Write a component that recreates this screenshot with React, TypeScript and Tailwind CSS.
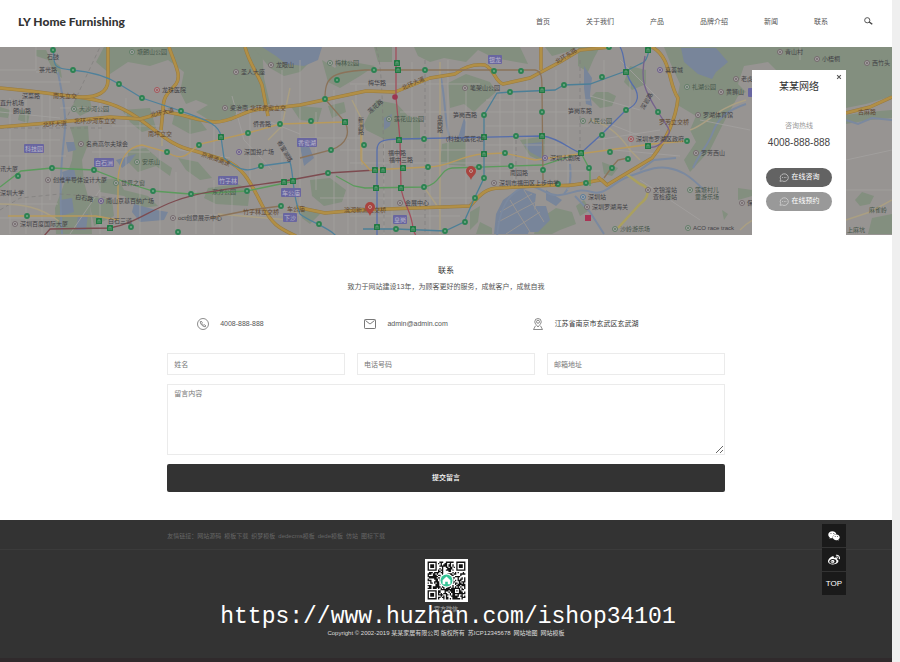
import { useState } from 'react'
import { FaWeixin, FaWeibo } from 'react-icons/fa'

const NAV_ITEMS = ['首页', '关于我们', '产品', '品牌介绍', '新闻', '联系']

const FRIEND_LINKS = ['网站源码', '模板下载', '织梦模板', 'dedecms模板', 'dede模板', '仿站', '图标下载']

/* ---------- Map data ---------- */

const GREENS = [
  'M104 47H238L262 47 264 78 270 104 238 110 232 121 212 122 196 112 208 105 196 100 186 104 180 92 184 72 168 60 150 66 128 62 110 74 96 62Z',
  'M36 50H46L50 58 60 66 62 78 54 72 48 60 36 56Z',
  'M70 127 88 126 89 142 82 160 84 182 90 204 92 234H56L55 208 64 184 72 160 74 140Z',
  'M0 107 10 110 8 118 0 117Z M20 110 30 112 28 123 18 120Z M76 97 90 99 92 110 80 116 72 108Z',
  'M122 110 150 108 156 128 142 132 130 122Z M175 112 198 118 207 130 190 134 172 124Z',
  'M128 150 146 148 160 160 172 168 170 176 156 166 138 172 128 162Z',
  'M98 180 118 178 124 190 148 196 158 206 142 208 124 196 100 192Z M88 196 112 200 114 216 94 226Z',
  'M178 158 198 162 212 178 200 180 186 170Z M208 188 238 184 250 190 248 206 216 204 204 198Z',
  'M253 47H320L316 56 300 72 284 76 270 68Z M290 105 322 108 318 122 300 120Z',
  'M322 60 335 68 342 60 375 66 360 76 340 88 328 82Z M364 124 376 100 397 104 408 116 420 118 420 140 384 139 366 130Z',
  'M374 47H392V62H378Z M414 47H520L528 64 494 58 478 50 466 62 444 58 430 62 418 56Z',
  'M448 83 466 74 490 82 496 92 482 104 474 112 464 104 450 108Z M442 144 466 138 466 166 440 164Z',
  'M310 180 330 178 346 190 342 202 324 206 312 196Z M328 106 344 102 346 112 332 118Z',
  'M520 140 545 136 544 162 530 156Z M545 47H580L566 52 552 56Z M578 47H600L594 58 588 72 578 66Z',
  'M590 98 600 108 612 106 616 96 608 92 596 92Z M630 66 646 70 646 84 632 90 624 82Z',
  'M664 47H892V96L866 104 846 108 846 70H776L768 62 744 66 738 84 746 92 738 96 724 122 710 150 690 172 684 160 696 142 690 130 696 116 676 104 680 84 670 62Z',
  'M538 220 556 208 572 212 576 224 560 230 552 234H534Z M576 206 584 200 590 210 580 216Z',
  'M470 212 480 206 478 222 470 230Z M480 222 492 228 492 234H476Z M300 206 320 214 310 224 302 218Z',
  'M846 115 868 112 892 110V118L870 120 846 124Z M872 218 892 214V234H868Z M855 200 862 192 874 196 870 204 860 206Z',
  'M602 162 618 168 612 176 604 174Z M722 210 728 214 724 220Z M738 188 752 190V196L738 200Z M668 190 672 198 668 200Z',
]

const WATERS = [
  'M262 47H322L318 60 304 66 286 64 276 56Z',
  'M681 48H716L728 62 716 72 712 79 698 74 684 62Z',
  'M503 200 520 188 536 194 534 212 528 234H494L496 214Z M536 206 546 206 550 220 538 232H526Z M546 190 562 200 556 206 546 200Z',
  'M524 144 542 142 541 158 530 152Z M584 66 592 78 590 94 592 106 586 104 584 88Z',
  'M134 204 156 210 168 212 164 220 140 222 132 212Z M300 146 308 144 314 158 304 166Z M116 160 136 154 130 162 122 168Z',
  'M66 142 74 142 76 150 68 152Z M62 172 74 168 76 178 64 182Z M60 200 72 198 74 212 62 216Z M78 216 88 214 86 230 76 230Z',
  'M384 118 392 114 390 126 384 130Z M459 108 464 118 458 138 464 142 466 122Z',
]

const RIVERS = [
  'M497 236C500 204 512 190 526 187S545 197 560 195 578 188 592 192 612 182 630 176 656 166 668 168 688 174 704 190',
  'M58 72C62 94 66 110 65 128S58 170 62 234',
  'M693 168C700 152 708 146 713 132S728 110 746 104',
  'M846 120 858 124 872 118 892 120',
  'M441 78C446 104 444 118 450 140',
  'M640 170 654 160 676 158',
  'M570 164C572 184 568 190 564 194 M575 196 590 212 604 234',
]

const MINOR_ROADS = [
  'M0 70H36V47 M36 72H58 M0 82H70 M10 98V234 M26 94V234 M42 94V234 M0 140H60 M0 156H66 M0 204H58 M0 218H54 M50 94V200',
  'M100 98V234 M112 126H160 M126 98V180 M140 122V234 M92 152H150 M150 126 180 150 230 158 M160 150V234 M176 172V234 M190 120V190',
  'M214 122V160 M232 96 244 140 272 170 M250 110V190 M270 122 300 134 M180 215H300 M196 190V234 M214 180V234 M232 192V234',
  'M282 70V190 M300 60V234 M316 112V190 M334 90V234 M348 140V234 M356 85V234 M384 140V234 M392 140V234 M412 62V234',
  'M430 80V234 M448 60V170 M466 90V206 M300 138H362 M340 150H480 M350 163H500 M320 198H480 M350 216H460 M350 84H480',
  'M400 112H580 M500 92V185 M514 92V185 M527 80V185 M556 70V185 M568 60V190 M486 100H590 M486 126H590 M486 145H570',
  'M486 171H600 M590 96 640 110 M600 120 650 140 M604 60V150 M620 60 660 100 M596 140 660 130 M630 80V160 M614 150 680 156',
  'M640 180 700 220 M700 120 750 130 M846 160 892 150 M846 190H892 M800 47V60 M60 108H110 M70 234 100 190 M0 112 60 118',
]

const LIGHT_ROADS = [
  'M440 62V234 M352 100 362 120V165 M424 187 440 210 M0 204C20 204 40 206 60 222 M162 125V146',
  'M590 120C610 124 622 138 630 150L640 160 M690 130C708 124 716 108 746 100 M740 230C756 214 770 210 846 214',
  'M846 220 870 212 892 200',
  'M290 88 282 126 268 140 M218 214 290 220 300 208',
]

const HIGHWAYS = [
  'M0 88 30 91 85 98C110 102 125 108 145 123S175 147 195 151L225 160C245 168 252 186 262 205S278 228 296 236',
  'M108 47V80C108 92 98 98 78 97',
  'M0 127 60 122 110 117 140 119 166 112C185 114 195 121 215 122 235 122 245 108 266 109L300 105 366 91 395 92 430 78 455 74C465 66 475 64 485 65 495 70 495 82 503 84L530 78 560 62 580 50 610 47',
  'M169 47C175 65 182 76 176 84S163 94 163 110L161 130',
  'M245 47C250 65 256 70 262 85L268 116',
  'M541 47V70',
  'M296 207 325 213 360 210 470 206C480 195 485 188 500 188L555 185C574 188 592 180 602 180L607 185 652 158C666 140 676 118 678 98 668 84 672 58 652 47',
  'M598 177 607 185 M846 113 870 107 892 97',
]

const SUBWAYS = [
  { color: '#4f819b', d: 'M53 47C55 64 50 68 72 70S108 77 119 84L142 98 181 111C205 120 220 124 221 137L224 158C240 172 250 172 261 166L290 162C294 175 292 195 300 214 310 222 330 228 336 236' },
  { color: '#5b9b5c', d: 'M0 187 21 171 52 168 94 170 130 184 153 191 190 194 247 191 290 182 M336 176 354 186 365 188 424 187C440 185 440 169 452 168L543 165 581 153 590 170V186' },
  { color: '#7d4b50', d: 'M44 236 50 229 110 228C134 224 150 210 175 201S220 190 285 181L328 173 376 170' },
  { color: '#b89a5c', d: 'M8 216H96L118 220V178C120 160 126 147 142 145L167 152C185 164 190 150 200 144L248 133 280 124 345 122 M361 120V160L370 170 428 167C450 167 460 155 484 154L504 153 535 160 652 144 687 141' },
  { color: '#8b735a', d: 'M300 158 331 150C348 144 350 132 345 122L325 99C325 78 330 72 365 70H535C542 71 542 78 542 90L543 180 M210 218 250 210 281 206 M604 178 612 167 618 160 628 158' },
  { color: '#a14f5c', d: 'M396 47V97L400 140 401 188C404 206 412 212 413 229L416 236' },
  { color: '#566eab', d: 'M377 236V150C377 142 381 139 400 139L542 136C560 138 570 150 581 153L604 132 626 110C640 104 640 94 632 84 622 70 626 56 620 47' },
  { color: '#4c7f97', d: 'M363 229 396 229 445 231 464 222 475 197 484 178V115L497 93 510 92 555 90 564 85 590 84 626 71 640 64C648 62 648 52 650 47' },
  { color: '#75628c', d: 'M645 56C640 80 644 90 658 112S672 130 664 140 650 147 648 147' },
]

const STATIONS = [
  [53, 50], [73, 70], [119, 84], [142, 98], [181, 111], [248, 133], [280, 124], [167, 152], [199, 145], [52, 168], [94, 170],
  [18, 176], [153, 191], [191, 194], [247, 191], [261, 166], [281, 206], [27, 216], [131, 227], [178, 232], [325, 99],
  [337, 80], [374, 70], [425, 70], [494, 71], [521, 71], [311, 121], [331, 150], [364, 145], [328, 173], [424, 139],
  [428, 167], [424, 187], [479, 167], [511, 166], [505, 153], [484, 115], [484, 178], [475, 198], [465, 222], [445, 231],
  [396, 229], [319, 224], [510, 92], [564, 85], [542, 112], [516, 136], [543, 170], [558, 184], [586, 183], [589, 168],
  [602, 77], [626, 110], [658, 112], [602, 135], [610, 152], [628, 159], [612, 168], [687, 141], [609, 47],
]

const HUBS = [
  [221, 137], [99, 221], [110, 228], [284, 182], [293, 181], [397, 63], [398, 70], [345, 122], [399, 140], [375, 170],
  [383, 170], [403, 168], [376, 188], [401, 188], [377, 227], [413, 229], [484, 137], [484, 154], [542, 90], [542, 136],
  [581, 153], [626, 72], [648, 50], [648, 146],
]

type MapLabel = { x: number; y: number; text: string; tone?: 'road' | 'park'; rotate?: number; icon?: string }

const MAP_LABELS: MapLabel[] = [
  { x: 39, y: 72, text: '茶光路' },
  { x: 47, y: 59, text: '石鼓' },
  { x: 22, y: 98, text: '深菜路' },
  { x: 53, y: 98, text: '南头立交', tone: 'road' },
  { x: 0, y: 105, text: '直升机场' },
  { x: 13, y: 113, text: '朗山路' },
  { x: 79, y: 111, text: '大沙河公园', tone: 'park', icon: '#5b7a62' },
  { x: 43, y: 127, text: '北环大道', tone: 'road', rotate: -4 },
  { x: 74, y: 123, text: '北环沙河东立交', tone: 'road' },
  { x: 137, y: 54, text: '塘朗山公园', tone: 'park', icon: '#5b7a62' },
  { x: 162, y: 92, text: '龙珠医院', icon: '#a84b50' },
  { x: 151, y: 117, text: '北环大道', tone: 'road', rotate: -12 },
  { x: 148, y: 136, text: '南坪立交', tone: 'road' },
  { x: 86, y: 146, text: '名商高尔夫球会', icon: '#716469' },
  { x: 142, y: 164, text: '安乐山', tone: 'park', icon: '#5b7a62' },
  { x: 201, y: 156, text: '京港澳高速', tone: 'road', rotate: 20 },
  { x: 241, y: 74, text: '圣人大座', icon: '#716469' },
  { x: 276, y: 67, text: '龙眼山', icon: '#716469' },
  { x: 230, y: 110, text: '梁治南', icon: '#716469' },
  { x: 250, y: 110, text: '北环香蜜立交', tone: 'road' },
  { x: 253, y: 126, text: '侨香路' },
  { x: 277, y: 142, text: '香蜜湖路', rotate: 60 },
  { x: 244, y: 154, text: '深国投广场', icon: '#66558d' },
  { x: 0, y: 171, text: '讯大厦' },
  { x: 53, y: 182, text: '创维半导体设计大厦', icon: '#716469' },
  { x: 121, y: 185, text: '世界之窗', tone: 'park', icon: '#5b7a62' },
  { x: 0, y: 195, text: '深圳大学' },
  { x: 75, y: 199, text: '白石路', rotate: 8 },
  { x: 106, y: 203, text: '南山京基百纳广场', icon: '#66558d' },
  { x: 108, y: 223, text: '白石三道' },
  { x: 20, y: 226, text: '深圳百度国际大厦', icon: '#716469' },
  { x: 178, y: 220, text: 'oct创意展示中心', icon: '#716469' },
  { x: 212, y: 194, text: '东方公园', tone: 'park' },
  { x: 243, y: 214, text: '竹子林立交桥', tone: 'road' },
  { x: 287, y: 211, text: '车公庙', tone: 'road' },
  { x: 335, y: 65, text: '梅林公园', tone: 'park', icon: '#5b7a62' },
  { x: 368, y: 85, text: '梅华路' },
  { x: 403, y: 90, text: '北环大道', tone: 'road', rotate: -24 },
  { x: 370, y: 114, text: '莲花路', rotate: -42 },
  { x: 394, y: 121, text: '莲花山公园', tone: 'park', icon: '#5b7a62' },
  { x: 453, y: 117, text: '笋岗西路' },
  { x: 568, y: 113, text: '笋岗东路' },
  { x: 470, y: 90, text: '笔架山公园', icon: '#716469' },
  { x: 446, y: 141, text: '(科技)(莲花北)' },
  { x: 388, y: 155, text: '福中路' },
  { x: 389, y: 162, text: '福中三路' },
  { x: 510, y: 175, text: '南园路' },
  { x: 499, y: 185, text: '深圳市福田区上步中学', icon: '#716469' },
  { x: 405, y: 205, text: '会展中心', icon: '#716469' },
  { x: 344, y: 212, text: '滨河新洲立交桥', tone: 'road' },
  { x: 557, y: 64, text: '北环东路', tone: 'road', rotate: -32 },
  { x: 550, y: 160, text: '深圳大剧院', icon: '#66558d' },
  { x: 588, y: 123, text: '人民公园', tone: 'park', icon: '#5b7a62' },
  { x: 665, y: 72, text: '喜荟城', icon: '#66558d' },
  { x: 692, y: 89, text: '礼湖公园', tone: 'park', icon: '#5b7a62' },
  { x: 741, y: 81, text: '老虎', icon: '#716469' },
  { x: 726, y: 94, text: '黄狮山', icon: '#716469' },
  { x: 644, y: 110, text: '深岩路', rotate: -60 },
  { x: 659, y: 124, text: '罗芳立交桥', tone: 'road' },
  { x: 703, y: 117, text: '罗湖体育馆', icon: '#716469' },
  { x: 636, y: 141, text: '深圳市罗湖区政府', icon: '#a84b50' },
  { x: 701, y: 155, text: '罗芳西山', icon: '#716469' },
  { x: 653, y: 192, text: '文锦渡站', icon: '#716469' },
  { x: 653, y: 199, text: '查检疫站' },
  { x: 695, y: 192, text: '莲塘村儿', tone: 'park', icon: '#5b7a62' },
  { x: 695, y: 199, text: '童游乐场', tone: 'park' },
  { x: 588, y: 199, text: '深圳站', icon: '#50799b' },
  { x: 592, y: 209, text: '深圳罗湖海关', icon: '#716469' },
  { x: 620, y: 231, text: '沙岭游乐场', tone: 'park', icon: '#5b7a62' },
  { x: 693, y: 230, text: 'ACO race track', icon: '#5b7a62' },
  { x: 785, y: 54, text: '青山村', icon: '#716469' },
  { x: 822, y: 61, text: '小梧桐', icon: '#716469' },
  { x: 872, y: 65, text: '西竹头', icon: '#716469' },
  { x: 747, y: 205, text: '保', icon: '#716469' },
  { x: 858, y: 114, text: '古麻路', tone: 'road' },
  { x: 869, y: 212, text: '麻雀岭', tone: 'park' },
  { x: 847, y: 232, text: '上麻坑', tone: 'park' },
]

const DISTRICTS = [
  { x: 24, y: 144, w: 20, text: '科技园' },
  { x: 94, y: 158, w: 20, text: '白石洲' },
  { x: 218, y: 176, w: 20, text: '竹子林' },
  { x: 281, y: 188, w: 20, text: '车公庙' },
  { x: 283, y: 213, w: 14, text: '下沙' },
  { x: 297, y: 138, w: 20, text: '香蜜湖' },
  { x: 488, y: 55, w: 14, text: '银龙' },
  { x: 393, y: 215, w: 14, text: '皇岗' },
]

const LABEL_FILL = { road: '#5f4630', park: '#46564a', plain: '#424146' }

function MapPin({ x, y }: { x: number; y: number }) {
  return (
    <g transform={`translate(${x} ${y})`}>
      <path d="M0 0C-1 -4-5 -5-5 -9A5 5 0 0 1 5 -9C5 -5 1 -4 0 0Z" fill="#a9443f" />
      <circle cx="0" cy="-9" r="1.5" fill="none" stroke="#bd9b96" />
    </g>
  )
}

function CityMap() {
  return (
    <svg viewBox="0 47 892 188" preserveAspectRatio="xMidYMid slice" className="block h-full w-full" role="img" aria-label="地图">
      <rect x="0" y="47" width="892" height="188" fill="#979492" />
      {GREENS.map((d) => (
        <path key={d} d={d} fill="#838f7f" />
      ))}
      {WATERS.map((d) => (
        <path key={d} d={d} fill="#78859a" />
      ))}
      {/* Fish ponds south of the river */}
      <path d="M500 212 532 194 M498 222 536 202 M506 234 540 212 M510 200 530 232 M524 190 544 222" stroke="#979492" fill="none" />
      {RIVERS.map((d) => (
        <path key={d} d={d} fill="none" stroke="#7b899f" strokeWidth="2" />
      ))}
      {MINOR_ROADS.map((d) => (
        <path key={d} d={d} fill="none" stroke="#a3a19f" strokeWidth="0.8" />
      ))}
      <path
        d="M0 128H70 88 105 M62 128 100 47 M0 210 20 198 60 194 116 198 M376 47C380 60 384 74 384 234 M425 60V234 M516 140V180 M580 60V150"
        fill="none"
        stroke="#7e7c7b"
        strokeWidth="0.7"
        strokeDasharray="4 3"
      />
      {LIGHT_ROADS.map((d) => (
        <path key={d} d={d} fill="none" stroke="#aa9f83" strokeWidth="1.5" />
      ))}
      <path d="M626 174 640 184C652 188 648 198 640 204L618 228" fill="none" stroke="#aaa05f" strokeWidth="2.5" />
      {HIGHWAYS.map((d) => (
        <g key={d} fill="none" strokeLinejoin="round">
          <path d={d} stroke="#987a40" strokeWidth="3.5" />
          <path d={d} stroke="#b18f46" strokeWidth="2.5" />
        </g>
      ))}
      {SUBWAYS.map((line) => (
        <path key={line.d} d={line.d} fill="none" stroke={line.color} strokeWidth="1.3" />
      ))}
      {STATIONS.map(([x, y]) => (
        <g key={`${x}-${y}`}>
          <circle cx={x} cy={y} r="2.9" fill="#2c8252" />
          <path d={`M${x - 1} ${y - 1}l2 2m0 -2l-2 2`} stroke="#8ab397" strokeWidth="0.6" />
        </g>
      ))}
      {HUBS.map(([x, y]) => (
        <g key={`${x}-${y}`}>
          <rect x={x - 3} y={y - 3} width="6" height="6" rx="0.6" fill="#217a43" />
          <path d={`M${x - 1} ${y - 1}v3m0 -3h2v3`} fill="none" stroke="#8ab397" strokeWidth="0.6" />
        </g>
      ))}
      <circle cx="395" cy="97" r="2.8" fill="#9c3650" />
      <rect x="585" y="215" width="6" height="6" fill="#a93455" />
      <rect x="748" y="88" width="8" height="9" rx="1" fill="#6966a0" />
      {DISTRICTS.map((d) => (
        <g key={d.text}>
          <rect x={d.x} y={d.y} width={d.w} height="9" rx="1" fill="#6966a0" />
          <text x={d.x + d.w / 2} y={d.y + 7} fontSize="6" textAnchor="middle" fill="#bab8ca">
            {d.text}
          </text>
        </g>
      ))}
      {MAP_LABELS.map((l) => (
        <g key={`${l.x}-${l.y}`} transform={`rotate(${l.rotate ?? 0} ${l.x} ${l.y})`}>
          {l.icon && <circle cx={l.x - 5} cy={l.y - 2} r="2.5" fill="#a5a2a3" stroke={l.icon} strokeWidth="0.9" />}
          {l.icon && <circle cx={l.x - 5} cy={l.y - 2} r="1" fill={l.icon} />}
          <text x={l.x} y={l.y} fontSize="6" fill={LABEL_FILL[l.tone ?? 'plain']}>
            {l.text}
          </text>
        </g>
      ))}
      {/* Streets written top to bottom */}
      {['新', '洲', '路'].map((c, i) => (
        <text key={c} x="358" y={122 + i * 6} fontSize="6" fill="#424146">{c}</text>
      ))}
      {['皇', '岗', '路'].map((c, i) => (
        <text key={c} x="437" y={120 + i * 6} fontSize="6" fill="#424146">{c}</text>
      ))}
      <MapPin x={370} y={216} />
      <MapPin x={471} y={180} />
    </svg>
  )
}

/* ---------- QR code ---------- */

const QR_SIZE = 29

function isDarkModule(row: number, col: number) {
  for (const [r, c] of [[0, 0], [0, QR_SIZE - 7], [QR_SIZE - 7, 0]]) {
    const y = row - r
    const x = col - c
    if (y >= -1 && y <= 7 && x >= -1 && x <= 7) {
      const ring = Math.max(Math.abs(y - 3), Math.abs(x - 3))
      return ring === 3 || ring <= 1
    }
  }
  const align = Math.max(Math.abs(row - 22), Math.abs(col - 22))
  if (align <= 2) return align !== 1
  const hash = Math.sin(row * 12.9898 + col * 78.233) * 43758.5453
  return hash - Math.floor(hash) > 0.48
}

function QrCode() {
  let d = ''
  for (let row = 0; row < QR_SIZE; row++) {
    for (let col = 0; col < QR_SIZE; col++) {
      if (isDarkModule(row, col)) d += `M${col} ${row}h1v1h-1z`
    }
  }
  return (
    <svg viewBox="-2 -2 33 33" className="size-[43px] bg-white" role="img" aria-label="官方微信二维码">
      <path d={d} fill="#111" />
      <circle cx="14.5" cy="14.5" r="5.5" fill="#fff" />
      <circle cx="14.5" cy="14.5" r="4.6" fill="#35c496" />
      <path d="M14.5 11.5l3 2.8v3h-2v-1.8h-2v1.8h-2v-3z" fill="#fff" />
    </svg>
  )
}

/* ---------- Icons ---------- */

function SearchIcon() {
  return (
    <svg viewBox="0 0 18 16" className="h-2 w-[9px]" fill="none" stroke="#444" aria-hidden="true">
      <circle cx="6.5" cy="6.5" r="5.2" strokeWidth="1.8" />
      <path d="M10.5 10l6 4.5" strokeWidth="3" />
    </svg>
  )
}

function PhoneIcon() {
  return (
    <svg viewBox="0 0 24 24" className="size-3" fill="none" stroke="#666" strokeWidth="1.5" aria-hidden="true">
      <circle cx="12" cy="12" r="11" />
      <path d="M8 6L6.500 7.500C6 12 12 18 16.500 17.500L18 16l-3-2.500-1.500 1C12 14 10 12 9.500 10.500L10.500 9z" />
    </svg>
  )
}

function MailIcon() {
  return (
    <svg viewBox="0 0 24 20" className="h-[10px] w-3" fill="none" stroke="#555" strokeWidth="1.6" aria-hidden="true">
      <rect x="1" y="1" width="22" height="18" rx="1.5" />
      <path d="M3 3l7.500 6q1.500 1 3 0L21 3" />
    </svg>
  )
}

function LocationIcon() {
  return (
    <svg viewBox="0 0 20 24" className="h-3 w-[10px]" fill="none" stroke="#666" strokeWidth="1.5" aria-hidden="true">
      <path d="M10 18C7 14 3.500 11 3.500 7.500a6.500 6.500 0 0 1 13 0C16.500 11 13 14 10 18z" />
      <circle cx="10" cy="7.500" r="3" />
      <path d="M5 15.500L1 23h18l-4-7.500" />
    </svg>
  )
}

function ChatIcon() {
  return (
    <svg viewBox="0 0 22 20" className="h-[9px] w-[10px]" fill="none" stroke="#ddd" strokeWidth="1.5" aria-hidden="true">
      <path d="M2 18.500l1.500-4.500A9 8.500 0 1 1 7 17.600z" />
      <path d="M7 10h1.500M10.800 10h1.500M14.500 10H16" strokeWidth="2" />
    </svg>
  )
}

/* ---------- Page sections ---------- */

function Header() {
  return (
    <header className="flex h-[47px] items-center justify-between bg-white pr-[19px] pb-[3px] pl-[18px]">
      <a href="#" className="font-['Lato',sans-serif] text-[12px] leading-4 font-black text-[#333]">
        LY Home Furnishing
      </a>
      <nav className="flex items-center gap-9 text-[7px] leading-3 text-[#555]">
        {NAV_ITEMS.map((item) => (
          <a key={item} href="#">
            {item}
          </a>
        ))}
        <button type="button" aria-label="搜索" className="pb-[2px]">
          <SearchIcon />
        </button>
      </nav>
    </header>
  )
}

function ContactPopup({ onClose }: { onClose: () => void }) {
  return (
    <aside className="absolute top-[23px] right-[46px] bottom-0 flex w-[94px] flex-col items-center bg-white">
      <button type="button" aria-label="关闭" onClick={onClose} className="absolute top-1 right-1">
        <svg viewBox="0 0 8 8" className="size-[6px]" stroke="#555" strokeWidth="1.4" aria-hidden="true">
          <path d="M1.500 1.500l5 5M6.500 1.500l-5 5" />
        </svg>
      </button>
      <h2 className="mt-[10px] text-[10px] leading-[14px] text-[#333]">某某网络</h2>
      <p className="mt-[26px] text-[7px] leading-3 text-[#999]">咨询热线</p>
      <p className="mt-1 text-[10px] leading-[14px] text-[#444]">4008-888-888</p>
      <button type="button" className="mt-[18px] flex h-[19px] w-[66px] items-center justify-center gap-[3px] rounded-full bg-[#636363] text-[7px] text-white">
        <ChatIcon />
        在线咨询
      </button>
      <button type="button" className="mt-[5px] flex h-[19px] w-[66px] items-center justify-center gap-[3px] rounded-full bg-[#999] text-[7px] text-white">
        <ChatIcon />
        在线预约
      </button>
    </aside>
  )
}

function ContactForm() {
  const field = 'w-full border border-[#ebebeb] bg-white px-[6px] text-[7px] text-[#555] outline-none placeholder:text-[#777]'

  return (
    <form className="mt-[21px]" onSubmit={(e) => e.preventDefault()}>
      <div className="grid grid-cols-3 gap-3">
        <input className={`${field} h-[22px]`} type="text" placeholder="姓名" aria-label="姓名" />
        <input className={`${field} h-[22px]`} type="tel" placeholder="电话号码" aria-label="电话号码" />
        <input className={`${field} h-[22px]`} type="email" placeholder="邮箱地址" aria-label="邮箱地址" />
      </div>
      <textarea className={`${field} mt-[9px] block h-[71px] py-[3px] leading-3`} placeholder="留言内容" aria-label="留言内容" />
      <button type="submit" className="mt-[9px] block h-7 w-full rounded-[2px] bg-[#333] text-[7px] font-medium text-white">
        提交留言
      </button>
    </form>
  )
}

function ContactSection() {
  return (
    <main className="mx-auto w-[62.5%] pt-[30px] pb-7 text-[#555]">
      <h1 className="text-center text-[8px] leading-3 text-[#333]">联系</h1>
      <p className="mt-1 text-center text-[7px] leading-3">致力于网站建设13年，为顾客更好的服务，成就客户，成就自我</p>
      <ul className="mx-auto mt-[23px] grid h-4 w-[90%] grid-cols-3 items-center text-[7px] leading-3">
        <li className="flex items-center gap-[11px] pl-[2px]">
          <PhoneIcon />
          4008-888-888
        </li>
        <li className="flex items-center gap-[11px] pl-[2px]">
          <MailIcon />
          admin@admin.com
        </li>
        <li className="flex items-center gap-3 pl-[3px] text-[#333]">
          <LocationIcon />
          江苏省南京市玄武区玄武湖
        </li>
      </ul>
      <ContactForm />
    </main>
  )
}

function SideToolbar() {
  const item = 'flex h-6 w-6 items-center justify-center border-b border-[#333] bg-[#1a1a1a] text-white'

  return (
    <div className="absolute top-1 right-[46px]">
      <button type="button" aria-label="微信" className={item}>
        <FaWeixin size={12} />
      </button>
      <button type="button" aria-label="微博" className={item}>
        <FaWeibo size={12} />
      </button>
      <a href="#" className={`${item} text-[8px]`}>
        TOP
      </a>
    </div>
  )
}

function Footer() {
  return (
    <footer className="relative border-b-4 border-[#302a2c] bg-[#333] pb-5 text-[6px] leading-[10px]">
      <div className="border-b border-[#3b3b3b]">
        <div className="mx-auto flex h-[29px] w-[62.5%] items-center gap-[3px] pt-[2px] text-[#666]">
          <span className="-mr-[3px]">友情链接：</span>
          {FRIEND_LINKS.map((link) => (
            <a key={link} href="#">
              {link}
            </a>
          ))}
        </div>
      </div>
      <div className="flex flex-col items-center pt-[9px] text-[#ddd]">
        <QrCode />
        <p className="mt-[2px] text-[#aaa]">官方微信</p>
        <div className="mt-[14px] flex gap-[3px]">
          <p>Copyright © 2002-2019 某某家居有限公司 版权所有</p>
          <p>苏ICP12345678</p>
          <a href="#">网站地图</a>
          <a href="#">网站模板</a>
        </div>
      </div>
      <p className="pointer-events-none absolute inset-x-0 top-[79px] pl-1 text-center font-['Liberation_Mono',monospace] text-[23px] leading-9 text-white">
        https://www.huzhan.com/ishop34101
      </p>
      <SideToolbar />
    </footer>
  )
}

export default function App() {
  const [popupOpen, setPopupOpen] = useState(true)

  return (
    <div className="bg-[#efefef] pr-2 font-['Liberation_Sans','Noto_Sans_CJK_SC',sans-serif]">
      <div className="bg-white">
        <Header />
        <section className="relative h-[188px] overflow-hidden">
          <CityMap />
          {popupOpen && <ContactPopup onClose={() => setPopupOpen(false)} />}
        </section>
        <ContactSection />
        <Footer />
      </div>
    </div>
  )
}
